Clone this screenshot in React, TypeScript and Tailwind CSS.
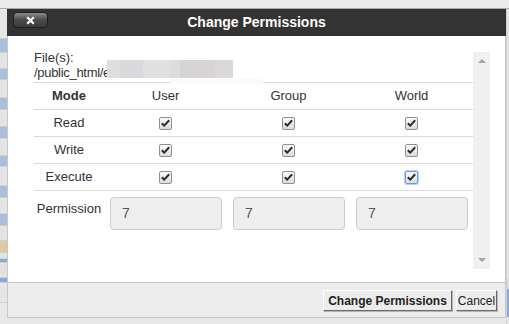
import React from 'react'

const cols = ['User', 'Group', 'World']
const rows = ['Read', 'Write', 'Execute']

function Check({ focus = false }: { focus?: boolean }) {
  return (
    <span
      className={`w-[13px] h-[13px] rounded-[2px] border flex items-center justify-center bg-linear-to-b from-[#fbfbfb] to-[#dcdcdc] ${focus ? 'border-[#6f9be6] shadow-[0_0_0_1px_#b9d0f5]' : 'border-[#8f8f8f]'}`}
    >
      <svg width="9" height="8" viewBox="0 0 9 8">
        <path d="M0.8 4.2 L3.2 6.6 L8.2 1.2" fill="none" stroke="#2b2b2b" strokeWidth="2" />
      </svg>
    </span>
  )
}

function PageStrip() {
  const blocks: [number, string][] = [
    [30, '#e6e6e6'], [14, '#a9bfdc'], [16, '#e4e4e4'], [11, '#a9bfdc'], [18, '#e4e4e4'], [12, '#a9bfdc'],
    [17, '#e4e4e4'], [12, '#a9bfdc'], [17, '#e4e4e4'], [11, '#a9bfdc'], [19, '#e4e4e4'], [12, '#a9bfdc'],
    [16, '#e4e4e4'], [12, '#a9bfdc'], [15, '#e4e4e4'], [12, '#dccaa4'], [6, '#e4e4e4'], [4, '#8fa6d8'],
    [15, '#e2e2e2'], [5, '#8fa6d8'], [20, '#e6e6e6'],
  ]
  return (
    <div className="w-[7px] shrink-0 flex flex-col">
      {blocks.map(([h, c], i) => (
        <div key={i} className="shrink-0 border-b border-[#d0d0d0]" style={{ height: h, backgroundColor: c }} />
      ))}
    </div>
  )
}

export default function App() {
  return (
    <div className="w-[509px] h-[324px] overflow-hidden bg-[#e8e8e8] flex flex-col font-['Liberation_Sans',Arial,sans-serif] text-[13px] text-[#333]">
      <div className="h-[9px] shrink-0 bg-[#ececec] border-b border-[#a9a9a9]" />
      <div className="flex flex-1 min-h-0">
        <PageStrip />

        <div className="w-[499px] shrink-0 flex flex-col h-[309px]">
          <div className="h-[27px] shrink-0 bg-[#333] relative flex items-center justify-center">
            <button className="absolute left-[6px] top-[3px] w-[35px] h-[16px] rounded-[4px] border border-[#1e1e1e] bg-linear-to-b from-[#8a8a8a] via-[#4a4a4a] to-[#3a3a3a] flex items-center justify-center">
              <svg width="9" height="9" viewBox="0 0 9 9">
                <path d="M1.2 1.2 L7.8 7.8 M7.8 1.2 L1.2 7.8" stroke="#fff" strokeWidth="2.2" />
              </svg>
            </button>
            <span className="text-white font-bold text-[14px]">Change Permissions</span>
          </div>

          <div className="h-[246px] shrink-0 bg-white border-l border-r border-[#c8c8c8] pt-[16px] pl-[26px]">
            <div className="flex h-[217px]">
              <div className="w-[439px] shrink-0">
                <div className="relative h-[32px] -mt-[2px]">
                  <div className="leading-[15px]">File(s):</div>
                  <div className="leading-[15px] tracking-[-0.3px]">/public_html/e</div>
                  <div className="absolute left-[73px] top-[10px] h-[18px] w-[126px] flex">
                    <span className="w-[13px] bg-[#dedede]" />
                    <span className="w-[23px] bg-[#dadadd]" />
                    <span className="w-[27px] bg-[#e1e0e1]" />
                    <span className="w-[10px] bg-[#dcdcdc]" />
                    <span className="w-[35px] bg-[#d7d4d5]" />
                    <span className="w-[18px] bg-[#dbd8da]" />
                  </div>
                  <div className="absolute left-[136px] top-[29px] h-[5px] w-[93px] bg-[#fafafa]" />
                </div>

                <div className="h-[27px] border-t border-[#dcdcdc] flex items-center">
                  <div className="w-[70px] text-center font-bold">Mode</div>
                  {cols.map((c) => (
                    <div key={c} className="w-[123px] text-center">{c}</div>
                  ))}
                </div>

                {rows.map((r) => (
                  <div key={r} className="h-[27px] border-t border-[#dcdcdc] flex items-center">
                    <div className="w-[70px] text-center">{r}</div>
                    {cols.map((c) => (
                      <div key={c} className="w-[123px] flex justify-center">
                        <Check focus={r === 'Execute' && c === 'World'} />
                      </div>
                    ))}
                  </div>
                ))}

                <div className="border-t border-[#dcdcdc] flex pt-[6px]">
                  <div className="w-[70px] text-center pt-[2px]">Permission</div>
                  {cols.map((c) => (
                    <div key={c} className="w-[123px] pl-[6px]">
                      <div className="w-[112px] h-[33px] rounded-[4px] border border-[#cccccc] bg-[#eeeeee] flex items-center pl-[11px] text-[14px] text-[#555]">
                        7
                      </div>
                    </div>
                  ))}
                </div>
              </div>

              <div className="w-[17px] shrink-0 bg-[#f0f0f0] flex flex-col items-center justify-between py-[7px]">
                <span className="w-0 h-0 border-l-[4px] border-r-[4px] border-b-[4px] border-l-transparent border-r-transparent border-b-[#a3a3a3]" />
                <span className="w-0 h-0 border-l-[4px] border-r-[4px] border-t-[4px] border-l-transparent border-r-transparent border-t-[#a3a3a3]" />
              </div>
            </div>
          </div>

          <div className="h-[36px] shrink-0 bg-[#ededed] border border-[#c8c8c8] flex items-center justify-end gap-[4px] pr-[8px] pt-[1px]">
            <button className="h-[21px] w-[129px] bg-[#ececec] border border-t-white border-l-white border-r-[#6a6a6a] border-b-[#6a6a6a] shadow-[1px_1px_0_#b5b5b5] text-[12px] font-bold text-[#222]">
              Change Permissions
            </button>
            <button className="h-[21px] w-[41px] bg-[#ececec] border border-t-white border-l-white border-r-[#6a6a6a] border-b-[#6a6a6a] shadow-[1px_1px_0_#b5b5b5] text-[12px] text-[#222]">
              Cancel
            </button>
          </div>
        </div>

        <div className="flex-1 flex flex-col border-l border-[#d0d0d0] bg-[#e4e4e4]">
          <div className="h-[270px] shrink-0" />
          <div className="h-[10px] shrink-0 bg-[#dcdcdc]" />
          <div className="h-[28px] shrink-0 bg-[#8fa6d8]" />
        </div>
      </div>
    </div>
  )
}
